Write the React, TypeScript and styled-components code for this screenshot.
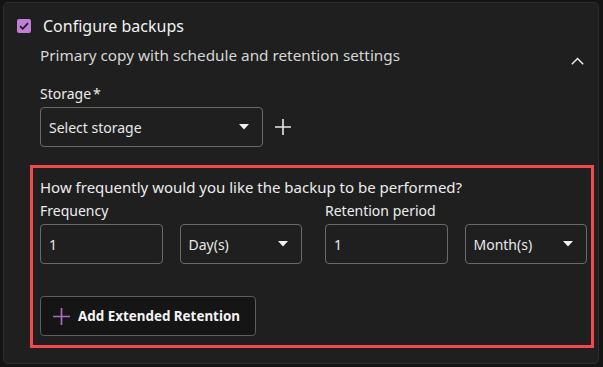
import styled, { createGlobalStyle } from 'styled-components'

const GlobalStyle = createGlobalStyle`
  html, body {
    margin: 0;
    padding: 0;
    background: #141414;
    font-family: 'Noto Sans', 'Open Sans', sans-serif;
    color: #e6e6e6;
  }
`

const Page = styled.div`
  padding: 2px 2px 2px 3px;
`

const Card = styled.div`
  width: 596px;
  height: 362px;
  box-sizing: border-box;
  background: #1f1f1f;
  border: 1px solid #2d2d2d;
  border-radius: 5px;
  padding: 14px 0 0 13px;
`

const Header = styled.div`
  display: flex;
  align-items: center;
  gap: 12px;
  height: 17px;
`

const Checkbox = styled.div`
  width: 14px;
  height: 14px;
  border-radius: 2px;
  background: #c17ed6;
  display: flex;
  align-items: center;
  justify-content: center;
`

const Title = styled.div`
  font-size: 16px;
  color: #f2f2f2;
`

const Body = styled.div`
  padding-left: 23px;
`

const SubRow = styled.div`
  display: flex;
  justify-content: space-between;
  align-items: center;
  margin-top: 11px;
  padding-right: 14px;
`

const Subtitle = styled.div`
  font-size: 15.3px;
  color: #d6d6d6;
  line-height: 20px;
`

const Chevron = styled.div`
  margin-top: 12px;
  display: flex;
`

const Label = styled.div`
  font-size: 14px;
  color: #ededed;
  line-height: 19px;
`

const StorageLabel = styled(Label)`
  margin-top: 19px;
`

const Required = styled.span`
  margin-left: 2px;
`

const StorageRow = styled.div`
  display: flex;
  align-items: center;
  gap: 12px;
  margin-top: 4px;
`

const Field = styled.div<{ width?: number }>`
  width: ${(p) => (p.width ? `${p.width}px` : 'auto')};
  height: 40px;
  box-sizing: border-box;
  border: 1px solid #6a6a6a;
  border-radius: 4px;
  display: flex;
  align-items: center;
  justify-content: space-between;
  padding: 0 13px 0 8px;
  font-size: 14px;
  color: #e8e8e8;
`

const Frame = styled.div`
  margin: 18px 4px 0 -10px;
  border: 3px solid #f24a4a;
  padding: 9px 6px 9px 7px;
`

const Question = styled.div`
  font-size: 15px;
  color: #ececec;
  line-height: 20px;
`

const Groups = styled.div`
  display: grid;
  grid-template-columns: 262px 262px;
  column-gap: 23px;
  margin-top: 4px;
`

const Group = styled.div`
  display: flex;
  flex-direction: column;
  gap: 4px;
`

const Pair = styled.div`
  display: grid;
  grid-template-columns: 1fr 1fr;
  column-gap: 17px;
`

const AddButton = styled.button`
  margin-top: 32px;
  width: 216px;
  height: 40px;
  box-sizing: border-box;
  background: #151515;
  border: 1px solid #5e5e5e;
  border-radius: 4px;
  display: flex;
  align-items: center;
  gap: 8px;
  padding: 0 0 0 12px;
  font-family: inherit;
  font-size: 13.4px;
  font-weight: 700;
  color: #f4f4f4;
`

const Caret = () => (
  <svg width="10" height="6" viewBox="0 0 10 6">
    <path d="M0 0H10L5 5.5Z" fill="#f2f2f2" />
  </svg>
)

const Plus = ({ color, size }: { color: string; size: number }) => (
  <svg width={size} height={size} viewBox="0 0 16 16">
    <path d="M8 0V16M0 8H16" stroke={color} strokeWidth="1.6" />
  </svg>
)

const Select = ({ value, width }: { value: string; width?: number }) => (
  <Field width={width}>
    <span>{value}</span>
    <Caret />
  </Field>
)

export default function App() {
  return (
    <>
      <GlobalStyle />
      <Page>
        <Card>
          <Header>
            <Checkbox>
              <svg width="12" height="12" viewBox="0 0 12 12">
                <path d="M2 6.2L4.8 8.8L10 3.2" stroke="#1c1c1c" strokeWidth="1.8" fill="none" />
              </svg>
            </Checkbox>
            <Title>Configure backups</Title>
          </Header>
          <Body>
            <SubRow>
              <Subtitle>Primary copy with schedule and retention settings</Subtitle>
              <Chevron>
                <svg width="13" height="8" viewBox="0 0 13 8">
                  <path d="M0.8 7.2L6.5 1.5L12.2 7.2" stroke="#f0f0f0" strokeWidth="1.4" fill="none" />
                </svg>
              </Chevron>
            </SubRow>
            <StorageLabel>
              Storage<Required>*</Required>
            </StorageLabel>
            <StorageRow>
              <Select value="Select storage" width={223} />
              <Plus color="#e6e6e6" size={16} />
            </StorageRow>
            <Frame>
              <Question>How frequently would you like the backup to be performed?</Question>
              <Groups>
                <Group>
                  <Label>Frequency</Label>
                  <Pair>
                    <Field>1</Field>
                    <Select value="Day(s)" />
                  </Pair>
                </Group>
                <Group>
                  <Label>Retention period</Label>
                  <Pair>
                    <Field>1</Field>
                    <Select value="Month(s)" />
                  </Pair>
                </Group>
              </Groups>
              <AddButton>
                <Plus color="#a86cc0" size={17} />
                Add Extended Retention
              </AddButton>
            </Frame>
          </Body>
        </Card>
      </Page>
    </>
  )
}
